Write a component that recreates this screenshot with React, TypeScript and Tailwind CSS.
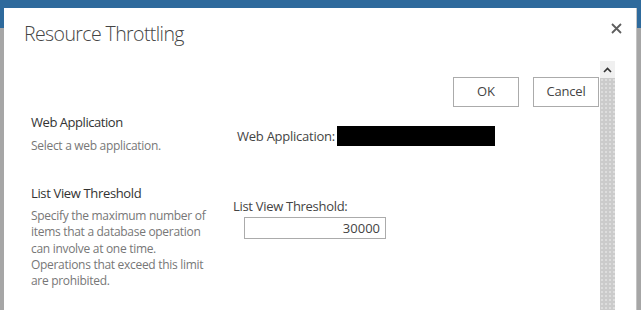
function CloseIcon() {
  return (
    <svg width="11" height="11" viewBox="0 0 11 11" className="block">
      <path d="M1 1L10 10M10 1L1 10" stroke="#5e5e5e" strokeWidth="1.8" />
    </svg>
  );
}

function Scrollbar() {
  return (
    <div className="w-[15px] flex flex-col shrink-0">
      <div className="h-[17px] bg-[#f0f0f0] flex items-center justify-center">
        <svg width="9" height="6" viewBox="0 0 9 6">
          <path d="M1 5L4.5 1.5L8 5" stroke="#333" strokeWidth="1.6" fill="none" />
        </svg>
      </div>
      <div className="flex-1 bg-[#cbcbcb] bg-[radial-gradient(#dedede_0.7px,transparent_0.9px)] bg-[length:4px_4px]" />
    </div>
  );
}

export default function App() {
  return (
    <div className="w-[641px] h-[310px] overflow-hidden bg-[linear-gradient(to_bottom,#2e6a9c_28px,#a6a6a6_28px)] pt-[8px] pl-[4px] pr-[4px] font-['Open_Sans','Noto_Sans',sans-serif]">
      <div className="bg-white h-full flex flex-col border-r border-[#c4c4c4]">
        <div className="h-[53px] flex justify-between shrink-0">
          <h1 className="pl-[20px] pt-[12px] text-[19.5px] leading-[28px] font-light tracking-[-0.6px] text-[#444]">
            Resource Throttling
          </h1>
          <button className="mt-[15px] mr-[14px] self-start">
            <CloseIcon />
          </button>
        </div>

        <div className="flex-1 flex pr-[21px] min-h-0">
          <div className="flex-1 pl-[27px]">
            <div className="flex justify-end gap-[14px] pt-[16px] pr-[1px]">
              <button className="w-[66px] h-[30px] border border-[#ababab] text-[13px] text-[#444]">
                OK
              </button>
              <button className="w-[66px] h-[30px] border border-[#ababab] text-[13px] tracking-[-0.2px] text-[#444]">
                Cancel
              </button>
            </div>

            <div className="flex mt-[6px]">
              <div className="w-[206px] shrink-0">
                <div className="text-[13px] leading-[18px] tracking-[-0.45px] text-[#333]">Web Application</div>
                <div className="mt-[7px] text-[12px] leading-[16px] tracking-[-0.3px] text-[#777]">
                  Select a web application.
                </div>
              </div>
              <div className="pt-[13px] flex items-center h-[33px]">
                <span className="text-[13px] leading-[18px] tracking-[-0.25px] text-[#444]">Web Application:</span>
                <div className="ml-[2px] w-[158px] h-[20px] bg-black" />
              </div>
            </div>

            <div className="flex mt-[30px]">
              <div className="w-[202px] shrink-0">
                <div className="text-[13px] leading-[18px] tracking-[-0.35px] text-[#333]">List View Threshold</div>
                <div className="mt-[6px] text-[12px] leading-[16.3px] tracking-[-0.3px] text-[#777] whitespace-nowrap">
                  Specify the maximum number of
                  <br />
                  items that a database operation
                  <br />
                  can involve at one time.
                  <br />
                  Operations that exceed this limit
                  <br />
                  are prohibited.
                </div>
              </div>
              <div className="pt-[13px]">
                <div className="text-[13px] leading-[18px] tracking-[-0.3px] text-[#444]">List View Threshold:</div>
                <input
                  readOnly
                  value="30000"
                  className="mt-[2px] ml-[11px] w-[142px] h-[22px] border border-[#ababab] text-right pr-[5px] text-[13px] text-[#444] outline-none"
                />
              </div>
            </div>
          </div>
          <Scrollbar />
        </div>
      </div>
    </div>
  );
}
